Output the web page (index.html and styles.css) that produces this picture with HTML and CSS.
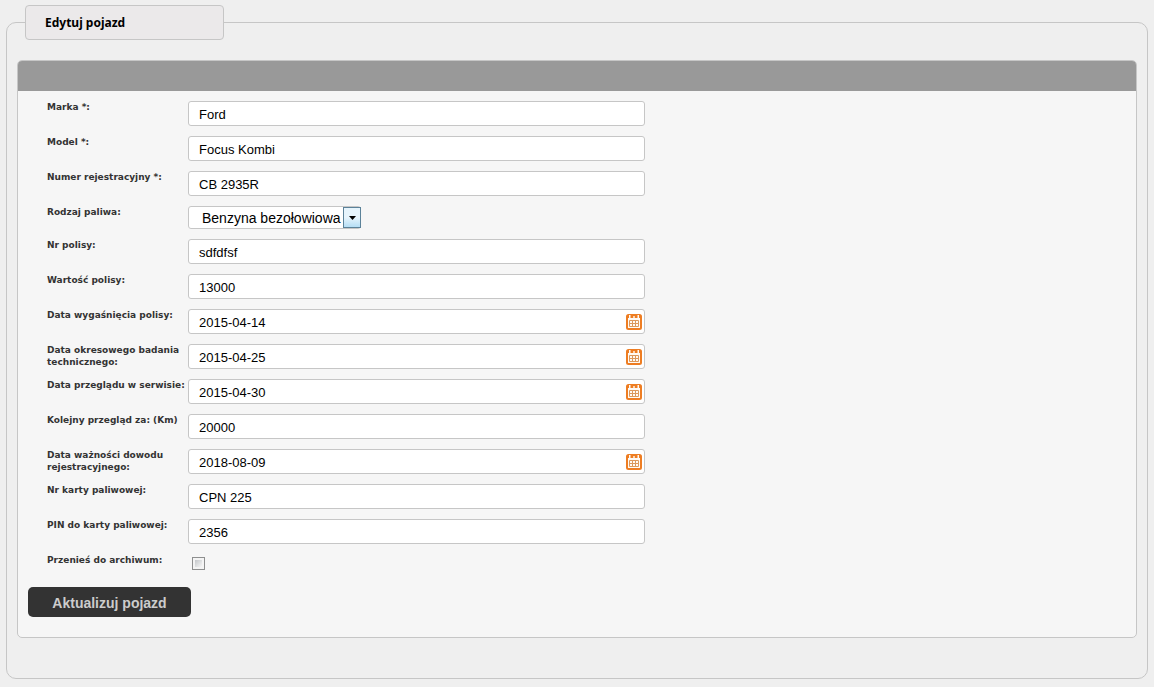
FILE: index.html
```html
<!DOCTYPE html>
<html lang="pl">
<head>
<meta charset="utf-8">
<title>Edytuj pojazd</title>
<link rel="stylesheet" href="styles.css">
</head>
<body>
<svg class="sprite" aria-hidden="true">
  <symbol id="calendar" viewBox="0 0 16 16">
    <rect x="1" y="1" width="14" height="14" rx="1.5" fill="#fffaf4" stroke="#ee7d22" stroke-width="2"/>
    <path d="M2 2h12v2H2z" fill="#ee7d22"/>
    <path d="M3 1h1.500v3H3zM7.300 2h1.400v2H7.300zM11.500 1H13v3h-1.500z" fill="#fffaf4"/>
    <path d="M3.500 6.500h9v6h-9zM3.500 9.500h9M6.500 6.500v6M9.500 6.500v6" fill="none" stroke="#dc985c"/>
  </symbol>
</svg>
<form>
  <fieldset class="group">
    <legend class="group-title">Edytuj pojazd</legend>
    <div class="panel">
      <div class="panel-header"></div>
      <div class="panel-body">
        <div class="rows">
          <div class="row"><label for="marka">Marka *:</label><input class="field" id="marka" type="text" value="Ford"></div>
          <div class="row"><label for="model">Model *:</label><input class="field" id="model" type="text" value="Focus Kombi"></div>
          <div class="row"><label for="rej">Numer rejestracyjny *:</label><input class="field" id="rej" type="text" value="CB 2935R"></div>
          <div class="row row-select"><label for="paliwo">Rodzaj paliwa:</label>
            <div class="select-wrap"><select id="paliwo" class="select"><option>Benzyna bezołowiowa</option></select><span class="select-arrow"><svg width="7" height="4" viewBox="0 0 7 4"><path d="M0 0h7L3.500 4z"/></svg></span></div>
          </div>
          <div class="row"><label for="polisa">Nr polisy:</label><input class="field" id="polisa" type="text" value="sdfdfsf"></div>
          <div class="row"><label for="wartosc">Wartość polisy:</label><input class="field" id="wartosc" type="text" value="13000"></div>
          <div class="row"><label for="data1">Data wygaśnięcia polisy:</label><div class="date"><input class="field" id="data1" type="text" value="2015-04-14"><svg class="icon"><use href="#calendar"/></svg></div></div>
          <div class="row"><label for="data2">Data okresowego badania technicznego:</label><div class="date"><input class="field" id="data2" type="text" value="2015-04-25"><svg class="icon"><use href="#calendar"/></svg></div></div>
          <div class="row"><label for="data3">Data przeglądu w serwisie:</label><div class="date"><input class="field" id="data3" type="text" value="2015-04-30"><svg class="icon"><use href="#calendar"/></svg></div></div>
          <div class="row"><label for="km">Kolejny przegląd za: (Km)</label><input class="field" id="km" type="text" value="20000"></div>
          <div class="row"><label for="data4">Data ważności dowodu rejestracyjnego:</label><div class="date"><input class="field" id="data4" type="text" value="2018-08-09"><svg class="icon"><use href="#calendar"/></svg></div></div>
          <div class="row"><label for="karta">Nr karty paliwowej:</label><input class="field" id="karta" type="text" value="CPN 225"></div>
          <div class="row"><label for="pin">PIN do karty paliwowej:</label><input class="field" id="pin" type="text" value="2356"></div>
          <div class="row row-check"><label for="arch">Przenieś do archiwum:</label><input class="check" id="arch" type="checkbox"></div>
        </div>
        <button class="submit" type="submit">Aktualizuj pojazd</button>
      </div>
    </div>
  </fieldset>
</form>
</body>
</html>
```
FILE: styles.css
```css
* { box-sizing: border-box; }
body {
  margin: 0;
  padding: 5px 6px 8px;
  background: #efefef;
  color: #333;
  font-family: "Liberation Sans", Arial, sans-serif;
}
.sprite { position: absolute; width: 0; height: 0; }
.group {
  margin: 0;
  min-width: 0;
  padding: 20px 10px 40px;
  border: 1px solid #c6c6c6;
  border-radius: 10px;
}
.group-title {
  margin-left: 8px;
  width: 199px;
  padding: 8px 19px;
  border: 1px solid #c6c6c6;
  border-radius: 4px;
  background: #ebe9ea;
  color: #000;
  font: bold 12px/17px "Noto Sans", Tahoma, sans-serif;
}
.panel {
  border: 1px solid #c6c6c6;
  border-radius: 5px;
  background: #f6f6f6;
  overflow: hidden;
}
.panel-header { height: 30px; background: #999; }
.panel-body { padding: 10px 10px 20px; }
.rows {
  display: flex;
  flex-direction: column;
  gap: 10px;
  padding-left: 19px;
}
.row {
  display: grid;
  grid-template-columns: 141px minmax(0, 457px);
  align-items: start;
  min-height: 25px;
}
.row-select, .row-check { min-height: 23px; }
.row label {
  color: #333;
  font: bold 9px/12px "DejaVu Sans", Verdana, sans-serif;
}
.field {
  display: block;
  width: 100%;
  height: 25px;
  padding: 1px 10px 0;
  border: 1px solid #c6c6c6;
  border-radius: 3px;
  background: #fff;
  color: #000;
  font: 13px "Liberation Sans", Arial, sans-serif;
}
.date { position: relative; }
.icon {
  position: absolute;
  top: 5px;
  right: 3px;
  width: 16px;
  height: 16px;
}
.select-wrap { position: relative; justify-self: start; }
.select {
  display: block;
  appearance: none;
  width: 173px;
  height: 23px;
  padding: 1px 18px 0 13px;
  border: 1px solid #c6c6c6;
  border-radius: 3px;
  background: #fff;
  color: #000;
  font: 14px "Liberation Sans", Arial, sans-serif;
}
.select-arrow {
  position: absolute;
  top: 1px;
  right: 0;
  width: 18px;
  height: 21px;
  display: flex;
  align-items: center;
  justify-content: center;
  border: 1px solid #5c8299;
  background: linear-gradient(#e6f4fc 50%, #b5def5);
  pointer-events: none;
}
.check {
  appearance: none;
  width: 13px;
  height: 13px;
  margin: 3px 4px;
  border: 1px solid #8e8f8f;
  background: linear-gradient(135deg, #c4c7ca, #f6f6f6) content-box, #f4f4f4;
  padding: 2px;
}
.submit {
  display: block;
  min-width: 163px;
  height: 30px;
  margin-top: 10px;
  padding: 2px 20px 0;
  border: 0;
  border-radius: 5px;
  background: #333;
  color: #ccc;
  font: bold 14px "Liberation Sans", Arial, sans-serif;
}
```
